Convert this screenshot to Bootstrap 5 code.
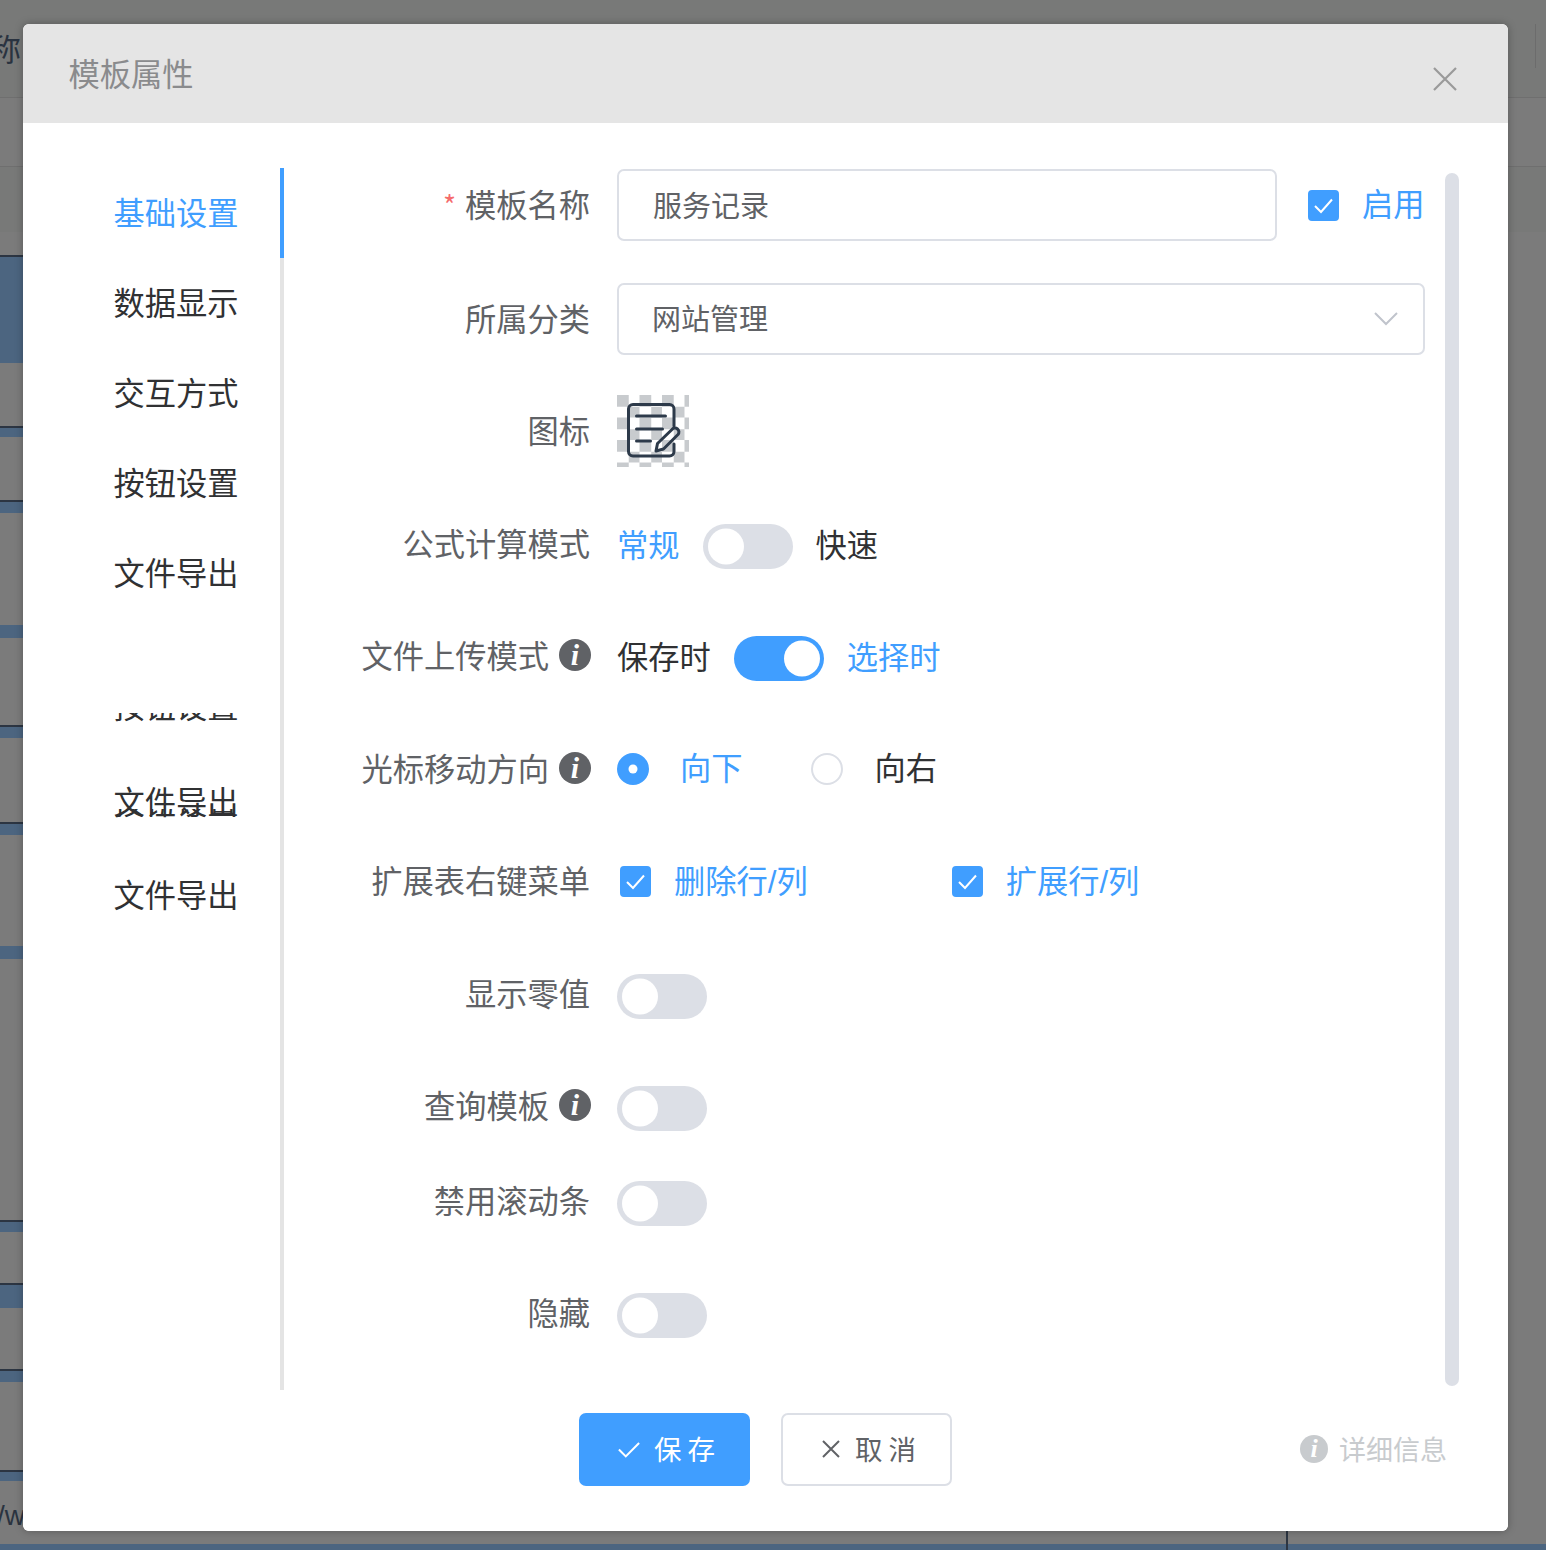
<!DOCTYPE html>
<html lang="zh-CN">
<head>
<meta charset="utf-8">
<title>模板属性</title>
<link href="https://cdn.jsdelivr.net/npm/bootstrap@5.3.0/dist/css/bootstrap.min.css" rel="stylesheet">
<style>
html,body{height:1550px;overflow:hidden}
body{position:relative;margin:0;padding:24px 38px 19px 23px;font-family:"Noto Sans CJK SC","Noto Sans",sans-serif;color:#303133;
background-color:#7b7b7b;background-repeat:no-repeat;
background-image:
linear-gradient(to bottom,transparent 0 255px,#2c3542 255px 257px,#4c6580 257px 363px,transparent 363px 426px,#2c3542 426px 428px,#4c6580 428px 437px,transparent 437px 500px,#2c3542 500px 502px,#4c6580 502px 513px,transparent 513px 625px,#4c6580 625px 638px,transparent 638px 725px,#2c3542 725px 727px,#4c6580 727px 738px,transparent 738px 822px,#2c3542 822px 824px,#4c6580 824px 835px,transparent 835px 946px,#4c6580 946px 959px,transparent 959px 1220px,#2c3542 1220px 1222px,#4c6580 1222px 1232px,transparent 1232px 1283px,#2c3542 1283px 1285px,#4c6580 1285px 1308px,transparent 1308px 1369px,#2c3542 1369px 1371px,#4c6580 1371px 1382px,transparent 1382px 1470px,#2c3542 1470px 1472px,#4c6580 1472px 1481px,transparent 1481px),
linear-gradient(to bottom,#787978 0 97px,#6f6f6f 97px 98px,#7b7b7b 98px 166px,#6f6f6f 166px 167px,#787978 167px 232px,#7b7b7b 232px 1544px,#4c6580 1544px);
background-size:30px 100%,100% 100%}
.bg-frag{position:absolute;color:#2a3340;line-height:1;white-space:nowrap}
.frag-a{left:-10px;top:32px;font-size:31px}
.frag-b{left:-3px;top:1502px;font-size:28px;font-family:"Liberation Sans",sans-serif}
.bg-rule{position:absolute;background:#6c6c6c}
.rule-a{left:1535px;top:24px;width:1px;height:44px}
.rule-b{left:1286px;top:1531px;width:2px;height:19px;background:#2c3542}
.dlg{position:relative;width:1485px;height:1507px;border:0;border-radius:6px;overflow:hidden;box-shadow:0 0 9px rgba(0,0,0,.28)}
.dlg-head{height:99px;background:#e5e5e5;border:0;padding:0 46px 0 45.500px;display:flex;align-items:center;justify-content:space-between;border-radius:6px 6px 0 0}
.dlg-title{font-size:31.250px;color:#8a8b8d;margin:0 0 1px;font-weight:400;line-height:1.4}
.dlg-x{background:none;border:0;padding:0;margin:10px 5px 0 0;line-height:0}
.dlg-main{display:flex;padding:45px 0 0;height:1267px}
.side{width:261px;height:1222px;flex:none;border-right:4px solid #e4e4e4;font-size:31.250px;position:relative;padding-left:90.500px;line-height:88px}
.side-item{height:90px;color:#303133}
.side-active{color:#409eff}
.side-active::after{content:"";position:absolute;right:-4px;top:0;width:4px;height:90px;background:#409eff}
.side-clip{height:9px;margin-top:95px;overflow:hidden}
.side-clip span{display:block;margin-top:-52px}
.side-mid{height:93px;margin-top:35px;position:relative}
.side-over{position:absolute;left:0;top:52px;height:9px;overflow:hidden}
.side-over span{display:block;margin-top:-52px}
.side-last{height:90px}
.form-area{flex:1;padding-top:1px;position:relative}
.f-row{display:flex;align-items:center;height:72px;margin-top:40px;font-size:31.250px;color:#303133}
.f-row:first-child{margin-top:0}
.f-row.m42{margin-top:42px}.f-row.m43{margin-top:43px}.f-row.m39{margin-top:39px}.f-row.m23{margin-top:23px}
.f-label{width:306px;flex:none;margin-right:27px;text-align:right;color:#606266;display:flex;justify-content:flex-end;align-items:center;white-space:nowrap;line-height:1.4;padding-bottom:6px}
.f-label.lab-up{padding-bottom:7px}
.f-label.lab-up .ico-i{margin-top:1px}
.f-label.lab-dn{padding-bottom:3px}
.f-req{color:#f56c6c;font-size:28px;margin-right:9px;line-height:1}
.f-body{display:flex;align-items:center;white-space:nowrap}
.f-body>span:not(.tile){padding-bottom:4px}
.f-body>span.chk-lat{font-family:"Liberation Sans","Noto Sans CJK SC",sans-serif;padding:4px 0 0}
.txt-on{color:#409eff}
.f-input.form-control,.f-select.form-select{height:72px;border:2px solid #dcdfe6;border-radius:7px;font-size:29px;color:#606266;box-shadow:none}
.f-input.form-control{width:660px;padding:0 34px 3px}
.f-select.form-select{width:808px;padding:0 33px 3px;background-image:url("data:image/svg+xml,%3Csvg xmlns='http://www.w3.org/2000/svg' viewBox='0 0 24 14'%3E%3Cpath d='M1 1l11 11L23 1' fill='none' stroke='%23c0c4cc' stroke-width='2'/%3E%3C/svg%3E");background-size:24px 14px;background-position:right 25px center}
.chk.form-check-input{width:31px;height:31px;margin:0;border:2px solid #dcdfe6;border-radius:4px;flex:none;box-shadow:none;background-size:31px 31px}
.chk.form-check-input:checked{background-color:#409eff;border-color:#409eff;background-image:url("data:image/svg+xml,%3Csvg xmlns='http://www.w3.org/2000/svg' viewBox='0 0 31 31'%3E%3Cpath d='M7 16l6 6L24 9.500' fill='none' stroke='%23fff' stroke-width='2'/%3E%3C/svg%3E")}
.chk.chk-top.form-check-input{margin-left:31px}
.chk.chk-1.form-check-input{margin-left:3px}
.chk.chk-2.form-check-input{margin-left:144px}
.rad.form-check-input{width:32px;height:32px;margin:0;border:2px solid #dcdfe6;flex:none;box-shadow:none}
.rad.form-check-input:checked{background-color:#409eff;border-color:#409eff;background-size:32px 32px;background-image:url("data:image/svg+xml,%3Csvg xmlns='http://www.w3.org/2000/svg' viewBox='0 0 32 32'%3E%3Ccircle cx='16' cy='16' r='4.500' fill='%23fff'/%3E%3C/svg%3E")}
.rad.rad-2.form-check-input{margin-left:68px}
.tog-wrap.form-switch{padding:0;margin:0;min-height:0;display:flex}
.tog-wrap.form-switch .form-check-input{width:90px;height:45px;margin:0;border:0;border-radius:23px;background-color:#dcdfe6;box-shadow:none;background-position:left center;background-size:45px 45px;background-image:url("data:image/svg+xml,%3Csvg xmlns='http://www.w3.org/2000/svg' viewBox='0 0 45 45'%3E%3Ccircle cx='23' cy='22.500' r='18' fill='%23fff'/%3E%3C/svg%3E")}
.tog-wrap.form-switch .form-check-input:checked{background-color:#409eff;background-position:right center}
.g23{gap:23px}
.ico-i{display:inline-flex;align-items:center;justify-content:center;width:32px;height:32px;border-radius:50%;background:#606266;color:#fff;font:italic 700 30px/1 "Liberation Serif",serif;margin-left:10px;margin-right:-1px;flex:none}
.ico-i.ico-pale{width:28px;height:28px;background:#c8cbce;font-size:26px;margin:0 11px 0 0}
.tile{width:72px;height:72px;display:block;background-color:#fff;background-image:conic-gradient(#fff 25%,#c8cbce 0 50%,#fff 0 75%,#c8cbce 0);background-size:22.500px 22.500px}
.rad-a{margin-left:32px}
.rad-b{margin-left:31px}
.chk-lab{margin-left:23px}
.scroll-bar{position:absolute;left:1161px;top:5px;width:14px;height:1213px;border-radius:7px;background:#dcdfe6}
.dlg-foot{display:grid;grid-template-columns:1fr auto 1fr;align-items:center;height:141px;padding:0 0 23px;background:#fff;border:0;border-radius:0}
.foot-btns{grid-column:2;display:flex;gap:31px}
.act{width:171px;height:73px;border-radius:7px;font-size:27.500px;display:flex;align-items:center;justify-content:center;padding:0 0 0 4px;line-height:1}
.act svg{margin-right:14px;flex:none}
.act-save.btn{background:#409eff;border:0;color:#fff}
.act-cancel.btn{background:#fff;border:2px solid #dcdfe6;color:#606266}
.foot-more{justify-self:end;padding-right:61px;display:flex;align-items:center;font-size:27px;color:#c8cbce}
</style>
</head>
<body>
<div class="bg-frag frag-a">称</div>
<div class="bg-frag frag-b">/w</div>
<div class="bg-rule rule-a"></div>
<div class="bg-rule rule-b"></div>

<div class="card dlg">
  <div class="card-header dlg-head">
    <h5 class="dlg-title">模板属性</h5>
    <button class="dlg-x" type="button" aria-label="关闭"><svg width="24" height="24" viewBox="0 0 24 24"><path d="M1 1l22 22M23 1L1 23" stroke="#9a9a9a" stroke-width="2.200" fill="none"/></svg></button>
  </div>
  <div class="dlg-main">
    <nav class="side">
      <div class="side-item side-active">基础设置</div>
      <div class="side-item">数据显示</div>
      <div class="side-item">交互方式</div>
      <div class="side-item">按钮设置</div>
      <div class="side-item">文件导出</div>
      <div class="side-clip"><span>按钮设置</span></div>
      <div class="side-mid">文件导出<div class="side-over"><span>按钮设置</span></div></div>
      <div class="side-last">文件导出</div>
    </nav>
    <div class="form-area">
      <div class="f-row">
        <div class="f-label lab-dn"><span class="f-req">*</span>模板名称</div>
        <div class="f-body">
          <input class="form-control f-input" type="text" value="服务记录">
          <input class="form-check-input chk chk-top" type="checkbox" checked>
          <span class="txt-on chk-lab">启用</span>
        </div>
      </div>
      <div class="f-row m42">
        <div class="f-label lab-dn">所属分类</div>
        <div class="f-body"><select class="form-select f-select"><option>网站管理</option></select></div>
      </div>
      <div class="f-row">
        <div class="f-label lab-dn">图标</div>
        <div class="f-body">
          <span class="tile"><svg width="72" height="72" viewBox="0 0 72 72" fill="none" stroke="#2d3a4a" stroke-width="3" stroke-linecap="round" stroke-linejoin="round"><path d="M57 31V14a4.500 4.500 0 0 0-4.500-4.500H16A4.500 4.500 0 0 0 11.500 14v42.500A4.500 4.500 0 0 0 16 61h36.500a4.500 4.500 0 0 0 4.500-4.500V49"/><path d="M19.500 21h29M19.500 34h26M19.500 46h14"/><path d="M39 56l1.500-7.500L55 34.500a3.600 3.600 0 0 1 6 5L46.500 54z"/></svg></span>
        </div>
      </div>
      <div class="f-row m43">
        <div class="f-label">公式计算模式</div>
        <div class="f-body g23">
          <span class="txt-on">常规</span>
          <div class="form-check form-switch tog-wrap"><input class="form-check-input" type="checkbox" role="switch"></div>
          <span>快速</span>
        </div>
      </div>
      <div class="f-row">
        <div class="f-label">文件上传模式<i class="ico-i">i</i></div>
        <div class="f-body g23">
          <span>保存时</span>
          <div class="form-check form-switch tog-wrap"><input class="form-check-input" type="checkbox" role="switch" checked></div>
          <span class="txt-on">选择时</span>
        </div>
      </div>
      <div class="f-row m39">
        <div class="f-label lab-dn">光标移动方向<i class="ico-i">i</i></div>
        <div class="f-body">
          <input class="form-check-input rad" type="radio" name="dir" checked>
          <span class="txt-on rad-b">向下</span>
          <input class="form-check-input rad rad-2" type="radio" name="dir">
          <span class="rad-a">向右</span>
        </div>
      </div>
      <div class="f-row">
        <div class="f-label lab-dn">扩展表右键菜单</div>
        <div class="f-body">
          <input class="form-check-input chk chk-1" type="checkbox" checked>
          <span class="txt-on chk-lab chk-lat">删除行/列</span>
          <input class="form-check-input chk chk-2" type="checkbox" checked>
          <span class="txt-on chk-lab chk-lat">扩展行/列</span>
        </div>
      </div>
      <div class="f-row m43">
        <div class="f-label lab-up">显示零值</div>
        <div class="f-body"><div class="form-check form-switch tog-wrap"><input class="form-check-input" type="checkbox" role="switch"></div></div>
      </div>
      <div class="f-row">
        <div class="f-label lab-up">查询模板<i class="ico-i">i</i></div>
        <div class="f-body"><div class="form-check form-switch tog-wrap"><input class="form-check-input" type="checkbox" role="switch"></div></div>
      </div>
      <div class="f-row m23">
        <div class="f-label lab-up">禁用滚动条</div>
        <div class="f-body"><div class="form-check form-switch tog-wrap"><input class="form-check-input" type="checkbox" role="switch"></div></div>
      </div>
      <div class="f-row">
        <div class="f-label lab-up">隐藏</div>
        <div class="f-body"><div class="form-check form-switch tog-wrap"><input class="form-check-input" type="checkbox" role="switch"></div></div>
      </div>
      <div class="scroll-bar"></div>
    </div>
  </div>
  <div class="card-footer dlg-foot">
    <div class="foot-btns">
      <button class="btn act act-save" type="button"><svg width="22" height="17" viewBox="0 0 24 18"><path d="M1 9l7.500 7.500L23 2" fill="none" stroke="#fff" stroke-width="2.200"/></svg>保 存</button>
      <button class="btn act act-cancel" type="button"><svg width="20" height="20" viewBox="0 0 20 20"><path d="M2 2l16 16M18 2L2 18" fill="none" stroke="#606266" stroke-width="2"/></svg>取 消</button>
    </div>
    <div class="foot-more"><i class="ico-i ico-pale">i</i>详细信息</div>
  </div>
</div>
<script src="https://cdn.jsdelivr.net/npm/bootstrap@5.3.0/dist/js/bootstrap.bundle.min.js"></script>
</body>
</html>
